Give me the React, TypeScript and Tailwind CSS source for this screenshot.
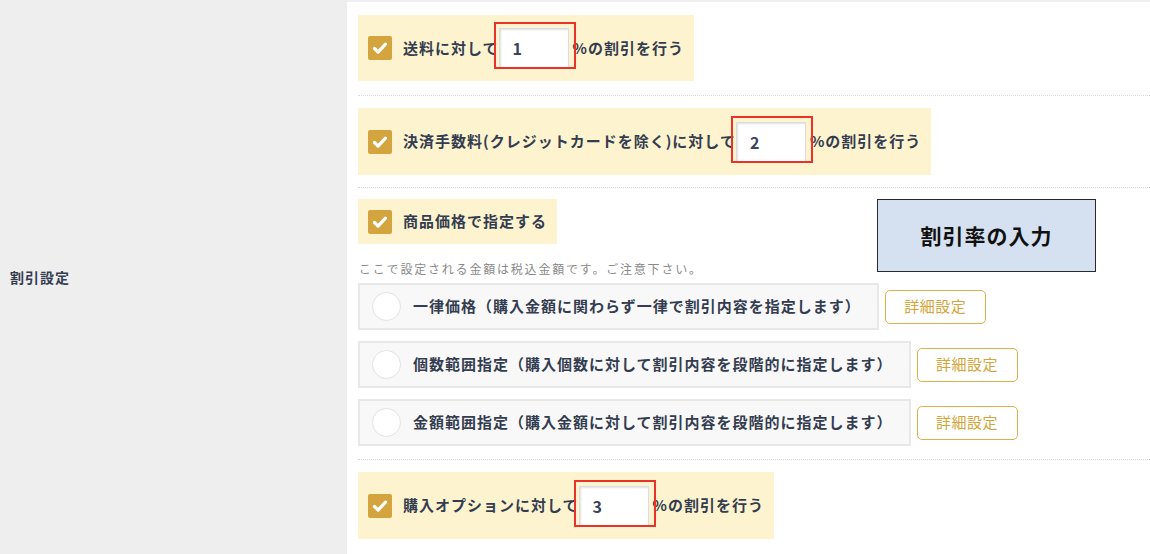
import React from "react";

const font = { fontFamily: '"Noto Sans CJK JP", "Noto Sans", sans-serif' };

function Check() {
  return (
    <span className="flex h-[24px] w-[24px] shrink-0 items-center justify-center rounded-[2px] bg-[#d4a43f]">
      <svg width="24" height="24" viewBox="0 0 24 24" fill="none">
        <path d="M6.5 12.5l3.6 3.6 7.4-8" stroke="#ffffff" strokeWidth="3.2" strokeLinecap="round" strokeLinejoin="round" />
      </svg>
    </span>
  );
}

function NumInput({ value }: { value: string }) {
  return (
    <span className="relative inline-flex">
      <span className="flex h-[40px] w-[70px] items-center border border-[#dcdcdc] bg-white pl-[13px] text-[16px] font-bold text-[#3b4459] shadow-[inset_1px_1px_2px_rgba(0,0,0,0.12)]">
        {value}
      </span>
      <span className="pointer-events-none absolute left-[-5px] top-[-6px] h-[47px] w-[82px] border-[2.5px] border-[#e8332a]" />
    </span>
  );
}

function Row({ children, pt, pb, last }: { children: React.ReactNode; pt: string; pb: string; last?: boolean }) {
  return (
    <div className={`${pt} ${pb} ${last ? "" : "border-b border-dotted border-[#d8d8d8]"}`}>{children}</div>
  );
}

function PercentBox({ label, value, h }: { label: string; value: string; h: string }) {
  return (
    <div className={`inline-flex ${h} items-center bg-[#fdf4cf] pl-[10px] pr-[10px]`}>
      <Check />
      <span className="ml-[11px] text-[15px] font-bold tracking-[1px] text-[#343d50]">{label}</span>
      <NumInput value={value} />
      <span className="ml-[4px] text-[15px] font-bold tracking-[1px] text-[#343d50]">%の割引を行う</span>
    </div>
  );
}

function Option({ label }: { label: string }) {
  return (
    <div className="flex items-center gap-[6px]">
      <div className="flex h-[47px] items-center border-2 border-[#e8e8e8] bg-[#f8f8f8] pl-[12px] pr-[16px]">
        <span className="h-[29px] w-[29px] shrink-0 rounded-full border border-[#e2e2e2] bg-white" />
        <span className="ml-[12px] text-[15px] font-bold tracking-[1px] text-[#343d50]">{label}</span>
      </div>
      <button className="flex h-[34px] w-[101px] items-center justify-center rounded-[5px] border border-[#dcb04c] bg-white text-[15px] tracking-[0.5px] text-[#d3a53a]">
        詳細設定
      </button>
    </div>
  );
}

export default function App() {
  return (
    <div className="relative flex h-[554px] w-[1150px] overflow-hidden bg-white" style={font}>
      <div className="flex w-[347px] shrink-0 items-center bg-[#eeeeee] pl-[10px]">
        <span className="text-[14px] font-bold tracking-[1px] text-[#343d50]">割引設定</span>
      </div>
      <div className="flex-1 border-t-2 border-[#efefef] pl-[11px]">
        <Row pt="pt-[13px]" pb="pb-[14px]">
          <PercentBox label="送料に対して" value="1" h="h-[66px]" />
        </Row>
        <Row pt="pt-[12px]" pb="pb-[12px]">
          <PercentBox label="決済手数料(クレジットカードを除く)に対して" value="2" h="h-[67px]" />
        </Row>
        <Row pt="pt-[11px]" pb="pb-[13px]">
          <div className="inline-flex h-[45px] items-center bg-[#fdf4cf] pl-[10px] pr-[10px]">
            <Check />
            <span className="ml-[11px] text-[15px] font-bold tracking-[1px] text-[#343d50]">商品価格で指定する</span>
          </div>
          <div className="mt-[16px] h-[18px] pl-[1px] text-[12px] leading-[18px] tracking-[1.8px] text-[#8a8a8a]">
            ここで設定される金額は税込金額です。ご注意下さい。
          </div>
          <div className="mt-[5px] flex flex-col gap-[11px]">
            <Option label="一律価格（購入金額に関わらず一律で割引内容を指定します）" />
            <Option label="個数範囲指定（購入個数に対して割引内容を段階的に指定します）" />
            <Option label="金額範囲指定（購入金額に対して割引内容を段階的に指定します）" />
          </div>
        </Row>
        <Row pt="pt-[12px]" pb="pb-[0px]" last>
          <PercentBox label="購入オプションに対して" value="3" h="h-[67px]" />
        </Row>
      </div>
      <div className="absolute left-[877px] top-[199px] flex h-[73px] w-[219px] items-center justify-center border border-[#2a2a2a] bg-[#d5e1f0]">
        <span className="text-[21px] font-bold tracking-[1px] text-[#111111]">割引率の入力</span>
      </div>
    </div>
  );
}
